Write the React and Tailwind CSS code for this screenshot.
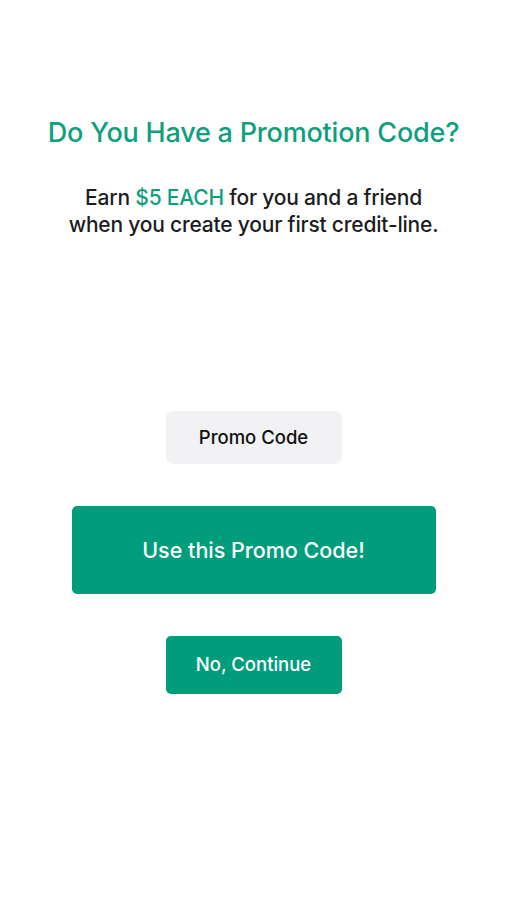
export default function App() {
  return (
    <div
      className="w-[507px] h-[900px] bg-white flex flex-col items-center"
      style={{ fontFamily: 'Inter, "Noto Sans", sans-serif' }}
    >
      <h1 className="mt-[115px] text-[27px] leading-[36px] font-medium text-[#0f9f7c] tracking-[-0.2px]">
        Do You Have a Promotion Code?
      </h1>
      <p className="mt-[33px] text-center text-[21px] leading-[27px] font-medium text-[#1c1c1e] tracking-[-0.2px]">
        Earn <span className="text-[#0f9f7c]">$5 EACH</span> for you and a friend
        <br />
        when you create your first credit-line.
      </p>
      <div className="mt-[173px] w-[176px] h-[53px] rounded-[7px] bg-[#f2f2f4] flex items-center justify-center text-[18.5px] font-medium text-[#111]">
        Promo Code
      </div>
      <button className="mt-[42px] w-[364px] h-[88px] rounded-[5px] bg-[#009d7c] text-white text-[21.5px] font-medium">
        Use this Promo Code!
      </button>
      <button className="mt-[42px] w-[176px] h-[58px] rounded-[5px] bg-[#009d7c] text-white text-[18.5px] font-medium">
        No, Continue
      </button>
    </div>
  );
}
